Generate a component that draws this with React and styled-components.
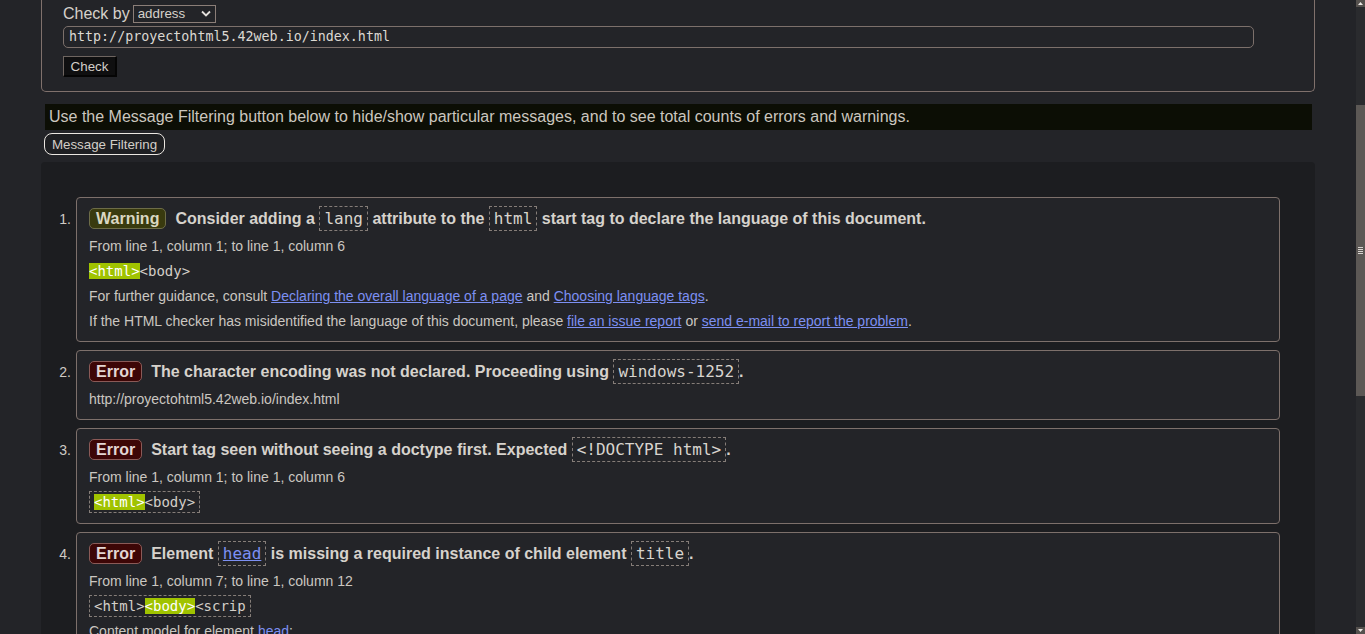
import React from "react";
import styled, { createGlobalStyle } from "styled-components";

const GlobalStyle = createGlobalStyle`
  html, body {
    margin: 0;
    padding: 0;
    height: 100%;
    overflow: hidden;
    background: #232428;
  }
  body {
    font-family: "Liberation Sans", Arial, sans-serif;
    color: #cfcac4;
  }
`;

const Page = styled.div`
  display: flex;
  width: 1365px;
  height: 634px;
  overflow: hidden;
  background: #232428;
`;

const Main = styled.main`
  flex: 1;
  min-width: 0;
  padding: 0 41px;
  overflow: hidden;
`;

/* ---------- fake scrollbar ---------- */
const ScrollTrack = styled.div`
  width: 9px;
  flex: none;
  display: flex;
  flex-direction: column;
  background: #2a2b2e;
`;
const ScrollArrow = styled.div`
  height: 7px;
  flex: none;
  display: flex;
  align-items: center;
  justify-content: center;
  background: #55514e;
`;
const ScrollGap = styled.div`
  height: ${(p) => p.$h}px;
  flex: ${(p) => (p.$grow ? 1 : "none")};
`;
const ScrollThumb = styled.div`
  height: 291px;
  flex: none;
  background: #5c5855;
  display: flex;
  flex-direction: column;
  align-items: center;
  justify-content: center;
  gap: 1px;
`;
const Grip = styled.span`
  display: block;
  width: 5px;
  height: 1px;
  background: #d8d4d0;
`;

/* ---------- form ---------- */
const FormBox = styled.div`
  border: 1px solid #80716c;
  border-top: none;
  border-radius: 0 0 5px 5px;
  padding: 0 20px 14px 21px;
`;
const CheckRow = styled.div`
  display: flex;
  align-items: center;
  gap: 3px;
  height: 20px;
  padding-top: 4px;
  font-size: 16px;
  color: #d6d1cb;
`;
const SelectWrap = styled.span`
  position: relative;
  display: inline-flex;
`;
const Select = styled.select`
  appearance: none;
  -webkit-appearance: none;
  width: 83px;
  height: 18px;
  margin: 0;
  padding: 0 0 0 4px;
  border: 1px solid #8b7e78;
  border-radius: 0;
  background: #232428;
  color: #d6d1cb;
  font-family: "Liberation Sans", Arial, sans-serif;
  font-size: 13.33px;
  line-height: 16px;
`;
const SelectChevron = styled.svg`
  position: absolute;
  right: 5px;
  top: 5px;
  pointer-events: none;
`;
const UrlInput = styled.div`
  box-sizing: border-box;
  width: 1191px;
  height: 22px;
  margin-top: 2px;
  padding: 0 5px;
  border: 1px solid #7c706b;
  border-radius: 5px;
  background: #232428;
  color: #dcd8d2;
  font-family: "DejaVu Sans Mono", monospace;
  font-size: 13.33px;
  line-height: 20px;
  white-space: nowrap;
`;
const CheckButton = styled.button`
  display: block;
  box-sizing: border-box;
  width: 54px;
  height: 21px;
  margin-top: 8px;
  padding: 0;
  background: #0f0f10;
  color: #d3cec8;
  border-style: solid;
  border-width: 1px 2px 2px 1px;
  border-color: #6e6560 #050505 #050505 #6e6560;
  font-family: "Liberation Sans", Arial, sans-serif;
  font-size: 13.33px;
`;

/* ---------- info ---------- */
const InfoBar = styled.p`
  margin: 12px 3px 0 4px;
  height: 26px;
  padding: 0 4px;
  background: #0c0e05;
  color: #cbc6bf;
  font-size: 16px;
  line-height: 26px;
  white-space: nowrap;
`;
const FilterButton = styled.button`
  display: block;
  box-sizing: border-box;
  margin: 3px 0 0 3px;
  width: 121px;
  height: 22px;
  padding: 0;
  background: #1e1f22;
  color: #d3cec8;
  border: 1px solid #ebe7e2;
  border-radius: 8px;
  font-family: "Liberation Sans", Arial, sans-serif;
  font-size: 13.33px;
`;

/* ---------- results ---------- */
const Results = styled.section`
  margin-top: 7px;
  background: #1c1d20;
  border-radius: 4px 4px 0 0;
  padding: 35px 35px 0 0;
  min-height: 500px;
`;
const List = styled.ol`
  list-style: none;
  margin: 0;
  padding: 0;
  display: flex;
  flex-direction: column;
  gap: 8px;
`;
const Item = styled.li`
  display: grid;
  grid-template-columns: 35px 1fr;
`;
const Num = styled.span`
  padding: 14px 5px 0 0;
  text-align: right;
  font-size: 14px;
  line-height: 16px;
  color: #cfcac4;
`;
const Box = styled.div`
  border: 1px solid #7d706b;
  border-radius: 4px;
  background: #232428;
  padding: 8px 12px 7px;
`;
const Title = styled.p`
  margin: 0 0 2px;
  font-size: 16px;
  font-weight: bold;
  line-height: 26px;
  color: #d6d2cc;
`;
const Badge = styled.span`
  display: inline-block;
  vertical-align: middle;
  margin: -3px 9px 0 0;
  padding: 0 6px;
  line-height: 19px;
  border-radius: 5px;
  border: 1px solid ${(p) => (p.$type === "warning" ? "#6d6c48" : "#8a5a57")};
  background: ${(p) => (p.$type === "warning" ? "#393a0e" : "#3d0606")};
  color: ${(p) => (p.$type === "warning" ? "#dad7c2" : "#e3d6d4")};
`;
const Code = styled.code`
  display: inline-block;
  vertical-align: middle;
  margin-top: -3px;
  padding: 2px 4px;
  border: 1px dashed #857d78;
  font-family: "DejaVu Sans Mono", monospace;
  font-size: 16px;
  font-weight: normal;
  line-height: 19px;
  color: #d8d4ce;
`;
const Line = styled.p`
  margin: 0 0 ${(p) => (p.$extra ? 1 : 0)}px;
  font-size: 14px;
  line-height: 25px;
  color: #cbc7c1;
  white-space: nowrap;
`;
const Extract = styled.code`
  display: inline-block;
  vertical-align: middle;
  margin-top: -2px;
  font-family: "DejaVu Sans Mono", monospace;
  font-size: 14px;
  line-height: 20px;
  color: #d3cfc9;
  padding: ${(p) => (p.$boxed ? "0 4px" : "0")};
  border: ${(p) => (p.$boxed ? "1px dashed #857d78" : "none")};
`;
const Mark = styled.mark`
  background: #a0c300;
  color: #ffffff;
`;
const Link = styled.a`
  color: #7d90f3;
  text-decoration: underline;
`;

const Chevron = ({ down }) => (
  <svg width="5" height="3" viewBox="0 0 5 3">
    <path
      d={down ? "M0 0h5L2.5 3z" : "M0 3h5L2.5 0z"}
      fill="#ece8e4"
    />
  </svg>
);

export default function App() {
  return (
    <>
      <GlobalStyle />
      <Page>
        <Main>
          <FormBox>
            <CheckRow>
              <span>Check by</span>
              <SelectWrap>
                <Select defaultValue="address">
                  <option value="address">address</option>
                  <option value="file">file upload</option>
                  <option value="text">text input</option>
                </Select>
                <SelectChevron width="10" height="7" viewBox="0 0 10 7">
                  <path
                    d="M1 1.5l4 4 4-4"
                    fill="none"
                    stroke="#e4e0dc"
                    strokeWidth="1.8"
                  />
                </SelectChevron>
              </SelectWrap>
            </CheckRow>
            <UrlInput>http://proyectohtml5.42web.io/index.html</UrlInput>
            <CheckButton>Check</CheckButton>
          </FormBox>

          <InfoBar>
            Use the Message Filtering button below to hide/show particular
            messages, and to see total counts of errors and warnings.
          </InfoBar>
          <FilterButton>Message Filtering</FilterButton>

          <Results>
            <List>
              <Item>
                <Num>1.</Num>
                <Box>
                  <Title>
                    <Badge $type="warning">Warning</Badge>
                    Consider adding a <Code>lang</Code> attribute to the{" "}
                    <Code>html</Code> start tag to declare the language of
                    this document.
                  </Title>
                  <Line>From line 1, column 1; to line 1, column 6</Line>
                  <Line>
                    <Extract>
                      <Mark>&lt;html&gt;</Mark>&lt;body&gt;
                    </Extract>
                  </Line>
                  <Line>
                    For further guidance, consult{" "}
                    <Link href="#">Declaring the overall language of a page</Link>{" "}
                    and <Link href="#">Choosing language tags</Link>.
                  </Line>
                  <Line>
                    If the HTML checker has misidentified the language of this
                    document, please <Link href="#">file an issue report</Link>{" "}
                    or <Link href="#">send e-mail to report the problem</Link>.
                  </Line>
                </Box>
              </Item>

              <Item>
                <Num>2.</Num>
                <Box>
                  <Title>
                    <Badge $type="error">Error</Badge>
                    The character encoding was not declared. Proceeding using{" "}
                    <Code>windows-1252</Code>.
                  </Title>
                  <Line>http://proyectohtml5.42web.io/index.html</Line>
                </Box>
              </Item>

              <Item>
                <Num>3.</Num>
                <Box>
                  <Title>
                    <Badge $type="error">Error</Badge>
                    Start tag seen without seeing a doctype first. Expected{" "}
                    <Code>&lt;!DOCTYPE html&gt;</Code>.
                  </Title>
                  <Line>From line 1, column 1; to line 1, column 6</Line>
                  <Line $extra>
                    <Extract $boxed>
                      <Mark>&lt;html&gt;</Mark>&lt;body&gt;
                    </Extract>
                  </Line>
                </Box>
              </Item>

              <Item>
                <Num>4.</Num>
                <Box>
                  <Title>
                    <Badge $type="error">Error</Badge>
                    Element{" "}
                    <Code>
                      <Link href="#">head</Link>
                    </Code>{" "}
                    is missing a required instance of child element{" "}
                    <Code>title</Code>.
                  </Title>
                  <Line>From line 1, column 7; to line 1, column 12</Line>
                  <Line>
                    <Extract $boxed>
                      &lt;html&gt;<Mark>&lt;body&gt;</Mark>&lt;scrip
                    </Extract>
                  </Line>
                  <Line>
                    Content model for element <Link href="#">head</Link>:
                  </Line>
                </Box>
              </Item>
            </List>
          </Results>
        </Main>

        <ScrollTrack>
          <ScrollArrow>
            <Chevron />
          </ScrollArrow>
          <ScrollGap $h={98} />
          <ScrollThumb>
            <Grip />
            <Grip />
            <Grip />
            <Grip />
          </ScrollThumb>
          <ScrollGap $grow />
          <ScrollArrow>
            <Chevron down />
          </ScrollArrow>
        </ScrollTrack>
      </Page>
    </>
  );
}
